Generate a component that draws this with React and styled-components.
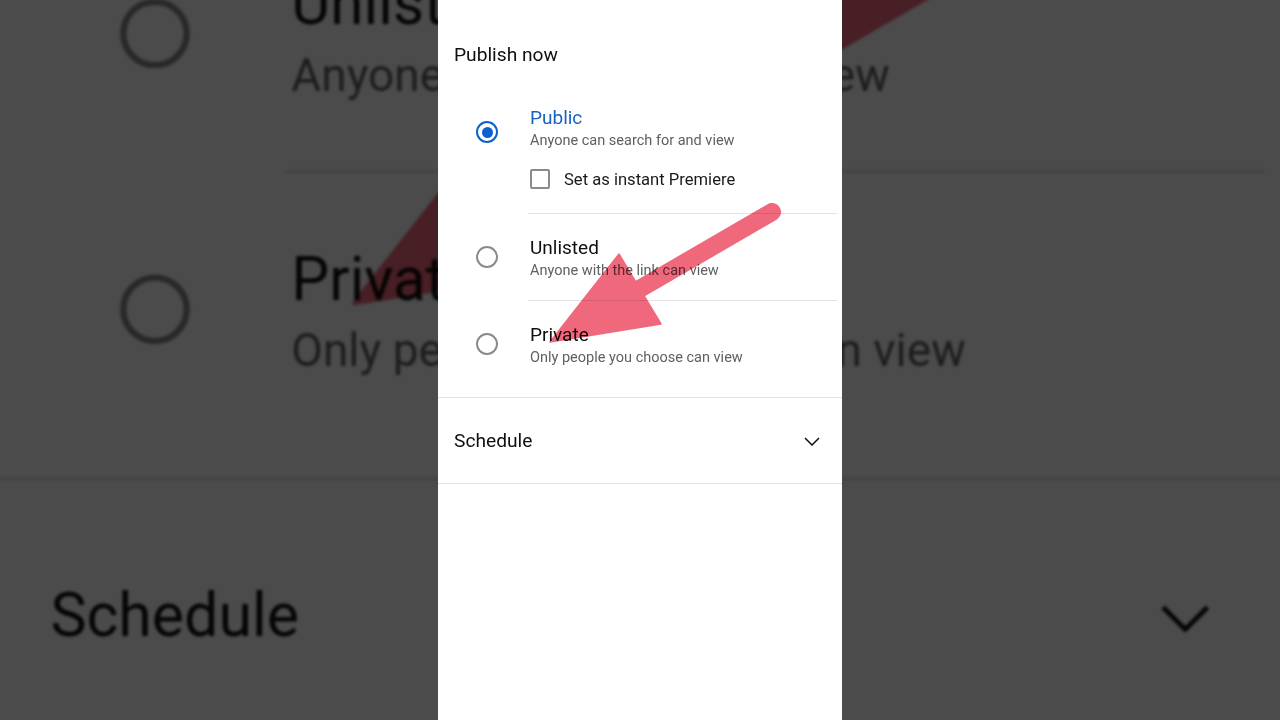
import React from "react";
import styled, { createGlobalStyle } from "styled-components";

const GlobalStyle = createGlobalStyle`
  html, body {
    margin: 0;
    padding: 0;
    background: #000;
    overflow: hidden;
  }
  * { box-sizing: border-box; }
`;

const Stage = styled.div`
  position: relative;
  width: 1280px;
  height: 720px;
  overflow: hidden;
  display: flex;
  justify-content: center;
  background: #4b4b4b;
  font-family: Roboto, "Noto Sans", "Liberation Sans", sans-serif;
`;

const Backdrop = styled.div`
  position: absolute;
  inset: 0;
  display: flex;
  justify-content: center;
  transform: scale(3.17);
  transform-origin: 640px 360px;
  filter: blur(0.5px) brightness(0.294);
  pointer-events: none;
`;

const Front = styled.div`
  position: relative;
  display: flex;
`;

const Panel = styled.div`
  position: relative;
  width: 404px;
  height: 720px;
  background: #ffffff;
  display: flex;
  flex-direction: column;
  color: #0f0f0f;
`;

const Header = styled.div`
  padding: 43px 16px 17px;
  font-size: 19.2px;
  line-height: 24px;
  color: #0f0f0f;
`;

const OptionList = styled.div`
  display: flex;
  flex-direction: column;
  border-bottom: 1px solid #e3e3e3;
`;

const OptionRow = styled.div`
  display: grid;
  grid-template-columns: 92px 1fr;
`;

const RadioCell = styled.div`
  padding-left: 38px;
  padding-top: ${(p) => p.$offset}px;
`;

const Radio = styled.div`
  width: 22px;
  height: 22px;
  border-radius: 50%;
  border: 2px solid ${(p) => (p.$checked ? "#0b62cf" : "#8a8a8a")};
  display: flex;
  align-items: center;
  justify-content: center;

  &::after {
    content: "";
    width: 11px;
    height: 11px;
    border-radius: 50%;
    background: ${(p) => (p.$checked ? "#0b62cf" : "transparent")};
  }
`;

const OptionBody = styled.div`
  padding: 22px 0 ${(p) => p.$bottom}px 2px;
  margin-left: -2px;
  margin-right: 5px;
  border-bottom: ${(p) => (p.$divider ? "1px solid #e3e3e3" : "none")};
`;

const OptionTitle = styled.div`
  font-size: 19px;
  line-height: 24px;
  color: ${(p) => (p.$active ? "#1a62c0" : "#0f0f0f")};
`;

const OptionSub = styled.div`
  margin-top: 1px;
  font-size: 14.5px;
  line-height: 20px;
  color: #606060;
`;

const CheckRow = styled.label`
  display: flex;
  align-items: center;
  gap: 14px;
  height: 40px;
  margin-top: 8px;
  font-size: 16.6px;
  color: #1a1a1a;
`;

const CheckBox = styled.span`
  width: 20px;
  height: 20px;
  border: 2px solid #8a8a8a;
  border-radius: 2px;
  flex: none;
`;

const ScheduleRow = styled.div`
  height: 86px;
  padding: 0 22px 0 16px;
  display: flex;
  align-items: center;
  justify-content: space-between;
  border-bottom: 1px solid #e3e3e3;
  font-size: 19.2px;
  line-height: 24px;
  color: #0f0f0f;
`;

const Chevron = styled.svg`
  width: 16px;
  height: 9px;
  margin-top: 1px;
`;

const ArrowMark = styled.svg`
  position: absolute;
  left: 100px;
  top: 195px;
  width: 250px;
  height: 160px;
  mix-blend-mode: multiply;
  pointer-events: none;
`;

const options = [
  {
    title: "Public",
    sub: "Anyone can search for and view",
    checked: true,
    offset: 37,
    bottom: 14,
    divider: true,
    premiere: true,
  },
  {
    title: "Unlisted",
    sub: "Anyone with the link can view",
    offset: 32,
    bottom: 19,
    divider: true,
  },
  {
    title: "Private",
    sub: "Only people you choose can view",
    offset: 32,
    bottom: 29,
    divider: false,
  },
];

function Screen() {
  return (
    <Panel>
      <Header>Publish now</Header>
      <OptionList>
        {options.map((o) => (
          <OptionRow key={o.title}>
            <RadioCell $offset={o.offset}>
              <Radio $checked={o.checked} />
            </RadioCell>
            <OptionBody $bottom={o.bottom} $divider={o.divider}>
              <OptionTitle $active={o.checked}>{o.title}</OptionTitle>
              <OptionSub>{o.sub}</OptionSub>
              {o.premiere && (
                <CheckRow>
                  <CheckBox />
                  Set as instant Premiere
                </CheckRow>
              )}
            </OptionBody>
          </OptionRow>
        ))}
      </OptionList>
      <ScheduleRow>
        <span>Schedule</span>
        <Chevron viewBox="0 0 16 9">
          <path
            d="M1 1 L8 8 L15 1"
            fill="none"
            stroke="#0f0f0f"
            strokeWidth="1.5"
          />
        </Chevron>
      </ScheduleRow>
      <ArrowMark viewBox="100 195 250 160">
        <g fill="#f0687c" stroke="#f0687c">
          <line
            x1="334"
            y1="212"
            x2="198"
            y2="291"
            strokeWidth="18"
            strokeLinecap="round"
          />
          <polygon
            points="112,342 181,254 223,324"
            strokeWidth="1.5"
            strokeLinejoin="round"
          />
        </g>
      </ArrowMark>
    </Panel>
  );
}

export default function App() {
  return (
    <>
      <GlobalStyle />
      <Stage>
        <Backdrop aria-hidden="true">
          <Screen />
        </Backdrop>
        <Front>
          <Screen />
        </Front>
      </Stage>
    </>
  );
}
